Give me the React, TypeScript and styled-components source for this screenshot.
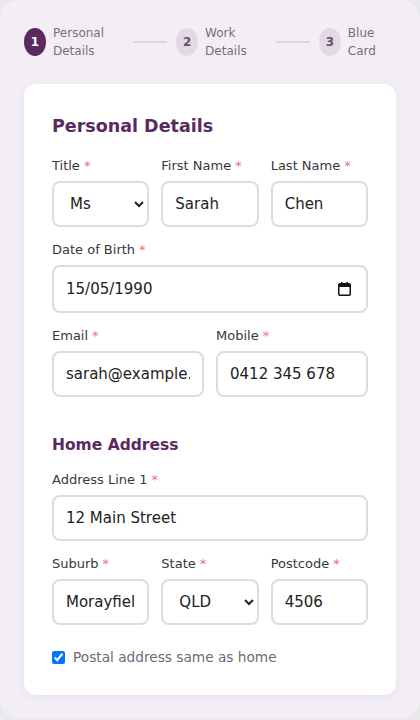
import React from "react";
import styled, { createGlobalStyle } from "styled-components";

const GlobalStyle = createGlobalStyle`
    * { box-sizing: border-box; }
    body {
        margin: 0;
        background: #e9e8ea;
        font-family: "DejaVu Sans", "Open Sans", sans-serif;
    }
`

const Page = styled.div`
    min-height: 718px;
    background: #f3eef5;
    border-radius: 20px;
    padding: 24px 24px 24px;
`

const Stepper = styled.div`
    display: flex;
    align-items: center;
    margin-bottom: 24px;
`

const Step = styled.div`
    display: flex;
    align-items: center;
    gap: 7px;
    flex: 1 1 auto;
`

const Circle = styled.div<{ $active?: boolean }>`
    width: 22px;
    height: 28px;
    flex-shrink: 0;
    border-radius: 50%;
    display: flex;
    align-items: center;
    justify-content: center;
    font-size: 12px;
    font-weight: 700;
    background: ${p => (p.$active ? "#5b2960" : "#e4d8e5")};
    color: ${p => (p.$active ? "#fff" : "#5e5560")};
`

const StepLabel = styled.div`
    font-size: 12px;
    line-height: 18px;
    color: #766f7c;
`

const Connector = styled.div`
    width: 34px;
    height: 2px;
    background: #e0d4e2;
    margin: 0 9px;
    flex-shrink: 0;
`

const Card = styled.div`
    background: #fff;
    border-radius: 12px;
    box-shadow: 0 2px 10px rgba(90, 40, 95, 0.06);
    padding: 30px 28px 30px;
`

const Heading = styled.h2<{ $small?: boolean }>`
    margin: 0 0 ${p => (p.$small ? "14px" : "19px")};
    font-size: ${p => (p.$small ? "15.5px" : "17.5px")};
    font-weight: 700;
    color: #5b2960;
    line-height: 24px;
`

const Section = styled.div`
    margin-top: 36px;
`

const Row = styled.div<{ $cols: number }>`
    display: grid;
    grid-template-columns: repeat(${p => p.$cols}, 1fr);
    gap: 12px;
    margin-bottom: 14px;
`

const Field = styled.label`
    display: flex;
    flex-direction: column;
    min-width: 0;
`

const LabelText = styled.span`
    font-size: 13px;
    line-height: 18px;
    color: #3b3540;
    margin-bottom: 6px;
`

const Req = styled.span`
    color: #f07080;
    margin-left: 4px;
`

const Input = styled.input`
    width: 100%;
    height: 46px;
    border: 2px solid #e4d7e5;
    border-radius: 8px;
    padding: 0 12px;
    font-family: inherit;
    font-size: 15px;
    color: #222;
    background: #fff;
    outline: none;
    min-width: 0;
`

const DateWrap = styled.div`
    position: relative;
`

const DateInput = styled(Input)`
    height: 48px;
    padding-right: 40px;
`

const CalIcon = styled.svg`
    position: absolute;
    right: 17px;
    top: 17px;
    pointer-events: none;
`

const Select = styled.select`
    width: 100%;
    height: 46px;
    border: 2px solid #e4d7e5;
    border-radius: 8px;
    padding: 0 8px 0 12px;
    font-family: inherit;
    font-size: 15px;
    color: #222;
    background: #fff;
    outline: none;
    min-width: 0;
`

const CheckRow = styled.label`
    display: flex;
    align-items: center;
    gap: 8px;
    margin-top: 24px;
    font-size: 13.7px;
    color: #6f6874;

    input {
        margin: 0;
        width: 13px;
        height: 13px;
    }
`

type FieldProps = {
    label: string
    children: React.ReactNode
}

const FormField = (props: FieldProps) => (
    <Field>
        <LabelText>{props.label}<Req>*</Req></LabelText>
        {props.children}
    </Field>
)

const steps = [
    { n: 1, a: "Personal", b: "Details" },
    { n: 2, a: "Work", b: "Details" },
    { n: 3, a: "Blue", b: "Card" },
]

export default function App() {
    return (
        <>
            <GlobalStyle />
            <Page>
                <Stepper>
                    {steps.map((s, i) => (
                        <React.Fragment key={s.n}>
                            {i > 0 && <Connector />}
                            <Step>
                                <Circle $active={i === 0}>{s.n}</Circle>
                                <StepLabel>{s.a}<br />{s.b}</StepLabel>
                            </Step>
                        </React.Fragment>
                    ))}
                </Stepper>

                <Card>
                    <Heading>Personal Details</Heading>
                    <Row $cols={3}>
                        <FormField label="Title">
                            <Select defaultValue="Ms">
                                <option>Mr</option>
                                <option>Ms</option>
                                <option>Mrs</option>
                                <option>Dr</option>
                            </Select>
                        </FormField>
                        <FormField label="First Name">
                            <Input defaultValue="Sarah" />
                        </FormField>
                        <FormField label="Last Name">
                            <Input defaultValue="Chen" />
                        </FormField>
                    </Row>
                    <Row $cols={1}>
                        <FormField label="Date of Birth">
                            <DateWrap>
                                <DateInput defaultValue="15/05/1990" />
                                <CalIcon width="13" height="14" viewBox="0 0 13 14">
                                    <rect x="3" y="0" width="1.6" height="3" fill="#111" />
                                    <rect x="8.4" y="0" width="1.6" height="3" fill="#111" />
                                    <rect x="0.75" y="1.75" width="11.5" height="11.5" rx="1.2" fill="none" stroke="#111" strokeWidth="1.5" />
                                    <rect x="1" y="2" width="11" height="3" fill="#111" />
                                </CalIcon>
                            </DateWrap>
                        </FormField>
                    </Row>
                    <Row $cols={2}>
                        <FormField label="Email">
                            <Input type="email" defaultValue="sarah@example.com" />
                        </FormField>
                        <FormField label="Mobile">
                            <Input type="tel" defaultValue="0412 345 678" />
                        </FormField>
                    </Row>

                    <Section>
                        <Heading $small>Home Address</Heading>
                        <Row $cols={1}>
                            <FormField label="Address Line 1">
                                <Input defaultValue="12 Main Street" />
                            </FormField>
                        </Row>
                        <Row $cols={3}>
                            <FormField label="Suburb">
                                <Input defaultValue="Morayfield" />
                            </FormField>
                            <FormField label="State">
                                <Select defaultValue="QLD">
                                    <option>NSW</option>
                                    <option>VIC</option>
                                    <option>QLD</option>
                                    <option>WA</option>
                                    <option>SA</option>
                                    <option>TAS</option>
                                </Select>
                            </FormField>
                            <FormField label="Postcode">
                                <Input defaultValue="4506" />
                            </FormField>
                        </Row>
                        <CheckRow>
                            <input type="checkbox" defaultChecked />
                            Postal address same as home
                        </CheckRow>
                    </Section>
                </Card>
            </Page>
        </>
    );
}
